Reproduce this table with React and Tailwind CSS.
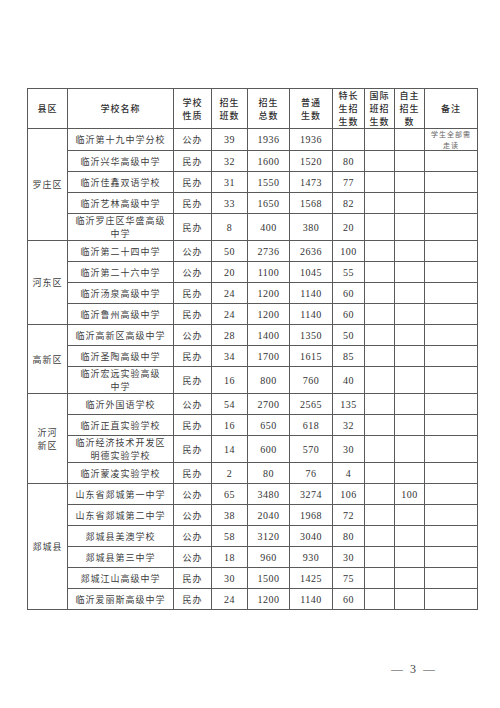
const districts = [
  {
    name: '罗庄区',
    schools: [
      { name: '临沂第十九中学分校', type: '公办', cls: '39', total: '1936', normal: '1936', note: true },
      { name: '临沂兴华高级中学', type: '民办', cls: '32', total: '1600', normal: '1520', art: '80' },
      { name: '临沂佳鑫双语学校', type: '民办', cls: '31', total: '1550', normal: '1473', art: '77' },
      { name: '临沂艺林高级中学', type: '民办', cls: '33', total: '1650', normal: '1568', art: '82' },
      { name: ['临沂罗庄区华盛高级', '中学'], type: '民办', cls: '8', total: '400', normal: '380', art: '20' },
    ],
  },
  {
    name: '河东区',
    schools: [
      { name: '临沂第二十四中学', type: '公办', cls: '50', total: '2736', normal: '2636', art: '100' },
      { name: '临沂第二十六中学', type: '公办', cls: '20', total: '1100', normal: '1045', art: '55' },
      { name: '临沂汤泉高级中学', type: '民办', cls: '24', total: '1200', normal: '1140', art: '60' },
      { name: '临沂鲁州高级中学', type: '民办', cls: '24', total: '1200', normal: '1140', art: '60' },
    ],
  },
  {
    name: '高新区',
    schools: [
      { name: '临沂高新区高级中学', type: '公办', cls: '28', total: '1400', normal: '1350', art: '50' },
      { name: '临沂圣陶高级中学', type: '民办', cls: '34', total: '1700', normal: '1615', art: '85' },
      { name: ['临沂宏远实验高级', '中学'], type: '民办', cls: '16', total: '800', normal: '760', art: '40' },
    ],
  },
  {
    name: ['沂河', '新区'],
    schools: [
      { name: '临沂外国语学校', type: '公办', cls: '54', total: '2700', normal: '2565', art: '135' },
      { name: '临沂正直实验学校', type: '民办', cls: '16', total: '650', normal: '618', art: '32' },
      { name: ['临沂经济技术开发区', '明德实验学校'], type: '民办', cls: '14', total: '600', normal: '570', art: '30' },
      { name: '临沂蒙凌实验学校', type: '民办', cls: '2', total: '80', normal: '76', art: '4' },
    ],
  },
  {
    name: '郯城县',
    schools: [
      { name: '山东省郯城第一中学', type: '公办', cls: '65', total: '3480', normal: '3274', art: '106', self: '100' },
      { name: '山东省郯城第二中学', type: '公办', cls: '38', total: '2040', normal: '1968', art: '72' },
      { name: '郯城县美澳学校', type: '公办', cls: '58', total: '3120', normal: '3040', art: '80' },
      { name: '郯城县第三中学', type: '公办', cls: '18', total: '960', normal: '930', art: '30' },
      { name: '郯城江山高级中学', type: '民办', cls: '30', total: '1500', normal: '1425', art: '75' },
      { name: '临沂爱丽斯高级中学', type: '民办', cls: '24', total: '1200', normal: '1140', art: '60' },
    ],
  },
];

const headers = [
  ['县区'],
  ['学校名称'],
  ['学校', '性质'],
  ['招生', '班数'],
  ['招生', '总数'],
  ['普通', '生数'],
  ['特长', '生招', '生数'],
  ['国际', '班招', '生数'],
  ['自主', '招生', '数'],
  ['备注'],
];

const widths = [40, 106, 38, 36, 42, 43, 32, 30, 30, 53];

const cell = 'border border-[#5a5a5a] p-0 text-center align-middle';
const cjk = "font-['Noto_Sans_CJK_SC',sans-serif] text-[9px] tracking-[1px] text-[#3c3c3c] leading-[13px]";
const num = "font-['Liberation_Serif',serif] text-[10px] tracking-[0.5px] text-[#333]";

function Lines({ text }) {
  const lines = Array.isArray(text) ? text : [text];
  return lines.map((l, i) => (
    <div key={i} className="whitespace-nowrap">
      {l}
    </div>
  ));
}

export default function App() {
  return (
    <div className="w-[500px] h-[708px] bg-white overflow-hidden pt-[88px] pl-[27px]">
      <table className="table-fixed border-collapse w-[450px]">
        <colgroup>
          {widths.map((w, i) => (
            <col key={i} style={{ width: w }} />
          ))}
        </colgroup>
        <thead>
          <tr className="h-[40px]">
            {headers.map((h, i) => (
              <th
                key={i}
                className={`${cell} font-['Noto_Sans_CJK_SC',sans-serif] font-medium text-[9px] tracking-[1px] leading-[13px] text-[#2e2e2e]`}
              >
                <Lines text={h} />
              </th>
            ))}
          </tr>
        </thead>
        <tbody>
          {districts.map((d) =>
            d.schools.map((s, i) => {
              const tall = Array.isArray(s.name);
              return (
                <tr key={`${d.name}-${i}`} className={tall ? 'h-[27px]' : 'h-[21px]'}>
                  {i === 0 && (
                    <td rowSpan={d.schools.length} className={`${cell} ${cjk}`}>
                      <Lines text={d.name} />
                    </td>
                  )}
                  <td className={`${cell} ${cjk}`}>
                    <Lines text={s.name} />
                  </td>
                  <td className={`${cell} ${cjk}`}>{s.type}</td>
                  <td className={`${cell} ${num}`}>{s.cls}</td>
                  <td className={`${cell} ${num}`}>{s.total}</td>
                  <td className={`${cell} ${num}`}>{s.normal}</td>
                  <td className={`${cell} ${num}`}>{s.art}</td>
                  <td className={`${cell} ${num}`}></td>
                  <td className={`${cell} ${num}`}>{s.self}</td>
                  <td className={`${cell}`}>
                    {s.note && (
                      <div className="font-['Noto_Sans_CJK_SC',sans-serif] text-[7px] tracking-[1px] leading-[10.5px] text-[#666]">
                        <div>学生全部需</div>
                        <div>走读</div>
                      </div>
                    )}
                  </td>
                </tr>
              );
            })
          )}
        </tbody>
      </table>
      <div className="w-[450px] mt-[50px] pr-[40px] flex justify-end">
        <span className="font-['Liberation_Serif',serif] text-[12px] text-[#444] tracking-[2px]">— 3 —</span>
      </div>
    </div>
  );
}
